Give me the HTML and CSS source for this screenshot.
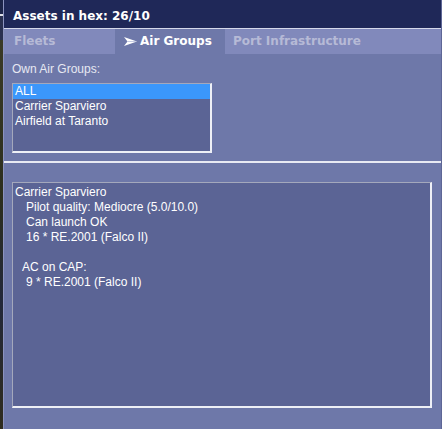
FILE: index.html
```html
<!DOCTYPE html>
<html>
<head>
<meta charset="utf-8">
<link rel="stylesheet" href="styles.css">
</head>
<body>
<div class="map"></div>
<div class="window">
  <div class="title">Assets in hex: 26/10</div>
  <div class="tabs">
    <div class="tab tab-fleets">Fleets</div>
    <div class="tab tab-air active"><svg class="arrow" width="13" height="9" viewBox="0 0 13 9"><polygon points="0,0 13,4.5 0,9 3.5,4.5" fill="#ffffff"/><line x1="3.5" y1="4.5" x2="12" y2="4.5" stroke="#b8bedc" stroke-width="0.8"/></svg>Air Groups</div>
    <div class="tab tab-port">Port Infrastructure</div>
  </div>
  <div class="upper">
    <div class="label">Own Air Groups:</div>
    <div class="list">
      <div class="row selected">ALL</div>
      <div class="row">Carrier Sparviero</div>
      <div class="row">Airfield at Taranto</div>
    </div>
  </div>
  <div class="sep"></div>
  <div class="info">
    <div class="line">Carrier Sparviero</div>
    <div class="line ind">Pilot quality: Mediocre (5.0/10.0)</div>
    <div class="line ind">Can launch OK</div>
    <div class="line ind">16 * RE.2001 (Falco II)</div>
    <div class="line blank"></div>
    <div class="line ind-s">AC on CAP:</div>
    <div class="line ind">9 * RE.2001 (Falco II)</div>
  </div>
</div>
</body>
</html>
```

FILE: styles.css
```css
html, body {
  margin: 0;
  padding: 0;
}
body {
  display: flex;
  width: 442px;
  height: 429px;
  overflow: hidden;
  background: #262a22;
  font-family: "Liberation Sans", Arial, sans-serif;
  font-size: 12px;
}
.map {
  width: 3px;
  background: linear-gradient(#1c2448 0, #1c2448 14px, #dfe0e8 14px, #dfe0e8 16px, #2a3050 16px, #2a3050 40px, #3a3a26 40px, #2c2e1e 200px, #23283a 300px, #2f2c1e 429px);
}
.window {
  flex: 1;
  display: flex;
  flex-direction: column;
  background: #6e78a9;
  border-left: 1px solid #8c93bf;
  border-right: 1px solid #5e6696;
}
.title {
  height: 29px;
  box-sizing: border-box;
  padding: 4px 0 0 9px;
  line-height: 25px;
  background: #1f2858;
  color: #ffffff;
  font-family: "DejaVu Sans", Verdana, sans-serif;
  font-weight: bold;
  font-size: 12px;
  border-bottom: 1px solid #d4d8ea;
}
.tabs {
  display: flex;
  height: 25px;
  font-family: "DejaVu Sans", Verdana, sans-serif;
  font-weight: bold;
  font-size: 12px;
  line-height: 25px;
}
.tab {
  box-sizing: border-box;
  background: #8189bb;
  color: #b6bad6;
  white-space: nowrap;
}
.tab.active {
  background: #6e78a9;
  color: #ffffff;
}
.tab-fleets {
  width: 111px;
  padding-left: 10px;
}
.tab-air {
  width: 110px;
  padding-left: 9px;
}
.tab-port {
  flex: 1;
  padding-left: 8px;
}
.arrow {
  display: inline-block;
  vertical-align: -1px;
  margin-right: 3px;
}
.upper {
  padding: 8px 0 0 8px;
}
.label {
  line-height: 15px;
  color: #e6e8f2;
}
.list {
  margin-top: 6px;
  width: 200px;
  height: 70px;
  box-sizing: border-box;
  background: #5b6495;
  border-top: 1px solid #a4a8bc;
  border-left: 1px solid #a4a8bc;
  border-right: 2px solid #eef0f6;
  border-bottom: 2px solid #eef0f6;
}
.row {
  height: 15px;
  line-height: 15px;
  padding-left: 2px;
  color: #ffffff;
  white-space: nowrap;
}
.row.selected {
  background: #3b97fb;
}
.sep {
  margin-top: 8px;
  height: 2px;
  background: #e8eaf3;
}
.info {
  margin: 19px 0 0 8px;
  width: 420px;
  height: 226px;
  box-sizing: border-box;
  padding: 2px 0 0 2px;
  background: #5b6495;
  border-top: 1px solid #a4a8bc;
  border-left: 1px solid #a4a8bc;
  border-right: 2px solid #eef0f6;
  border-bottom: 2px solid #eef0f6;
  color: #ffffff;
}
.line {
  height: 15px;
  line-height: 15px;
  white-space: nowrap;
}
.ind {
  padding-left: 11px;
}
.ind-s {
  padding-left: 7px;
}
```
